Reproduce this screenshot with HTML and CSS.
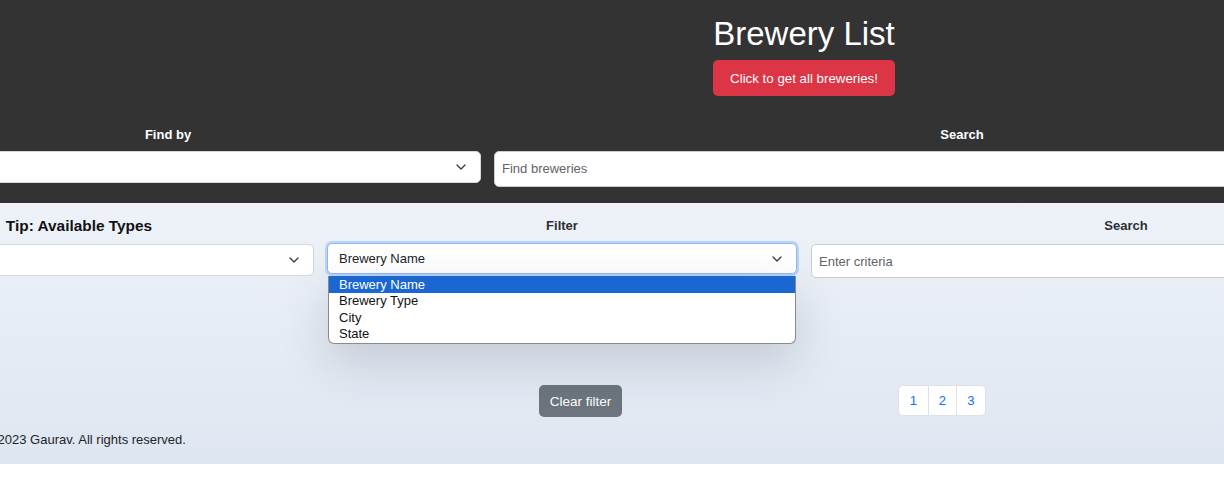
FILE: index.html
```html
<!DOCTYPE html>
<html lang="en">
<head>
<meta charset="utf-8">
<title>Brewery List</title>
<link rel="stylesheet" href="styles.css">
</head>
<body>
<div class="page">
  <header class="top">
    <div class="hero">
      <h1 class="title">Brewery List</h1>
      <button class="btn btn-red" type="button">Click to get all breweries!</button>
    </div>
    <div class="find-row">
      <div class="col col-find">
        <label class="lbl">Find by</label>
        <div class="select short">
          <span></span>
          <svg class="chev" width="10" height="6" viewBox="0 0 10 6"><path d="M1 1l4 4 4-4" fill="none" stroke="#343a40" stroke-width="1.3" stroke-linecap="round" stroke-linejoin="round"/></svg>
        </div>
      </div>
      <div class="col col-search">
        <label class="lbl">Search</label>
        <div class="input tall"><span class="ph">Find breweries</span></div>
      </div>
    </div>
  </header>
  <main class="light">
    <div class="filter-row">
      <div class="fcol fcol-tip">
        <label class="lbl tip">Tip: Available Types</label>
        <div class="select">
          <span></span>
          <svg class="chev" width="10" height="6" viewBox="0 0 10 6"><path d="M1 1l4 4 4-4" fill="none" stroke="#343a40" stroke-width="1.3" stroke-linecap="round" stroke-linejoin="round"/></svg>
        </div>
      </div>
      <div class="fcol fcol-filter">
        <label class="lbl dark">Filter</label>
        <div class="select focused">
          <span class="val">Brewery Name</span>
          <svg class="chev" width="10" height="6" viewBox="0 0 10 6"><path d="M1 1l4 4 4-4" fill="none" stroke="#343a40" stroke-width="1.3" stroke-linecap="round" stroke-linejoin="round"/></svg>
        </div>
        <ul class="dropdown">
          <li class="opt active">Brewery Name</li>
          <li class="opt">Brewery Type</li>
          <li class="opt">City</li>
          <li class="opt">State</li>
        </ul>
      </div>
      <div class="fcol fcol-search">
        <label class="lbl dark">Search</label>
        <div class="input"><span class="ph">Enter criteria</span></div>
      </div>
    </div>
    <div class="actions">
      <button class="btn btn-gray" type="button">Clear filter</button>
      <nav class="pagination">
        <a class="pg">1</a><a class="pg">2</a><a class="pg">3</a>
      </nav>
    </div>
    <footer class="foot">©2023 Gaurav. All rights reserved.</footer>
  </main>
</div>
</body>
</html>
```

FILE: styles.css
```css
* { box-sizing: border-box; }
html, body { margin: 0; padding: 0; }
body {
  background: #fff;
  overflow: hidden;
  font-family: "Liberation Sans", Arial, sans-serif;
  color: #212529;
}
.page {
  width: 1620px;
  margin-left: -160px;
}
.top {
  background: #333333;
  padding: 14px 0 16px;
}
.hero {
  display: flex;
  flex-direction: column;
  align-items: center;
  padding-left: 308px;
}
.title {
  margin: 0;
  font-size: 33px;
  line-height: 40px;
  font-weight: 400;
  color: #fff;
}
.btn {
  font-family: "Liberation Sans", Arial, sans-serif;
  border: 0;
  border-radius: 5px;
  color: #fff;
  cursor: pointer;
}
.btn-red {
  margin-top: 6px;
  background: #dc3545;
  height: 36px;
  width: 182px;
  font-size: 13.3px;
  padding: 0;
}
.find-row {
  display: flex;
  gap: 13px;
  padding: 0 30px 0 15px;
  margin-top: 31px;
  align-items: flex-start;
}
.col { display: flex; flex-direction: column; }
.col-find { width: 626px; }
.col-search { flex: 1; }
.lbl {
  display: block;
  text-align: center;
  font-size: 13px;
  line-height: 16px;
  font-weight: 700;
  color: #fff;
  margin-bottom: 8px;
}
.select {
  display: flex;
  align-items: center;
  justify-content: space-between;
  height: 32px;
  background: #fff;
  border: 1px solid #d4d8dd;
  border-radius: 5px;
  padding: 0 14px 0 11px;
  font-size: 13px;
  color: #212529;
}
.chev { display: block; }
.input {
  display: flex;
  align-items: center;
  height: 36px;
  background: #fff;
  border: 1px solid #c9ccd0;
  border-radius: 5px;
  padding: 0 7px;
  font-size: 13px;
}
.input.tall { padding-bottom: 1px; }
.ph { color: #5f6368; }
.light {
  background: linear-gradient(180deg, #eef2f8 0%, #dee6f1 100%);
  padding: 15px 0 16px;
}
.filter-row {
  display: flex;
  gap: 13px;
  padding: 0 19px 0 4px;
  align-items: flex-start;
}
.fcol { display: flex; flex-direction: column; position: relative; }
.fcol-tip, .fcol-filter { width: 470px; }
.fcol-search { flex: 1; margin-left: 1px; }
.lbl.tip {
  color: #111;
  font-size: 15.4px;
  font-weight: 700;
  margin-bottom: 10px;
}
.lbl.dark {
  color: #2b2f33;
  margin-bottom: 10px;
}
.fcol .input { height: 34px; }
.select.focused {
  border-color: #8db8f5;
  box-shadow: 0 0 0 2px rgba(13, 110, 253, 0.22);
  height: 31px;
  margin-top: -1px;
}
.dropdown {
  position: absolute;
  left: 1px;
  top: 58px;
  width: 468px;
  margin: 0;
  padding: 0;
  list-style: none;
  background: #fff;
  border: 1px solid #8a8a8a;
  border-top: 0;
  border-radius: 0 0 6px 6px;
  box-shadow: 0 18px 48px rgba(40, 50, 70, 0.18);
  font-size: 13px;
  overflow: hidden;
  z-index: 5;
}
.opt {
  height: 16.6px;
  line-height: 16.6px;
  padding-left: 10px;
  color: #111;
}
.opt.active {
  background: #1a67d2;
  color: #fff;
  height: 17px;
  line-height: 17px;
}
.actions {
  display: flex;
  align-items: flex-start;
  margin-top: 107px;
  padding-left: 699px;
}
.btn-gray {
  background: #6c757d;
  height: 32px;
  width: 83px;
  font-size: 13.5px;
  padding: 0;
}
.pagination {
  display: flex;
  margin-left: 276px;
  height: 31px;
  border: 1px solid #dee2e6;
  border-radius: 5px;
  background: #fff;
  overflow: hidden;
}
.pg {
  width: 28.5px;
  display: flex;
  align-items: center;
  justify-content: center;
  font-size: 13px;
  color: #0d6efd;
  border-left: 1px solid #dee2e6;
}
.pg:first-child { border-left: 0; }
.foot {
  margin-top: 15px;
  padding-left: 148px;
  font-size: 13px;
  line-height: 16px;
  color: #212529;
}
```
